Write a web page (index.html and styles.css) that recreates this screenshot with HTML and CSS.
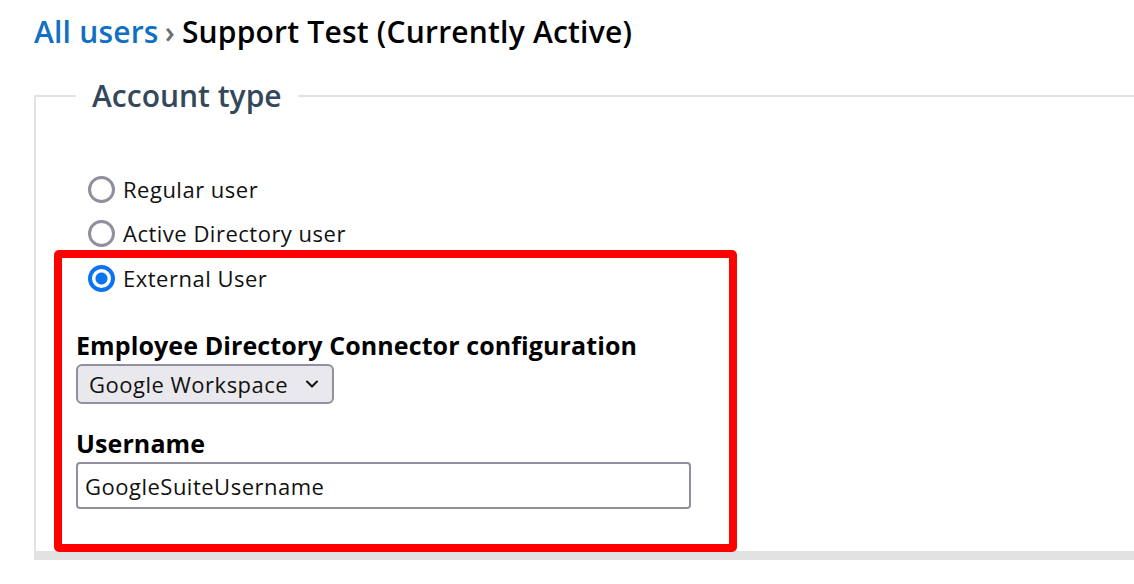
FILE: index.html
```html
<!DOCTYPE html>
<html lang="en">
<head>
<meta charset="utf-8">
<title>Support Test</title>
<link rel="stylesheet" href="styles.css">
</head>
<body>
<div class="page">
  <h1 class="crumbs"><a class="crumb-link" href="#">All users</a><span class="crumb-sep">›</span><span class="crumb-current">Support Test (Currently Active)</span></h1>

  <fieldset class="account">
    <legend class="account-legend">Account type</legend>

    <div class="radio-list">
      <label class="radio-row"><input class="radio" type="radio" name="type"><span>Regular user</span></label>
      <label class="radio-row"><input class="radio" type="radio" name="type"><span>Active Directory user</span></label>
    </div>

    <div class="highlight">
      <label class="radio-row radio-row-inner"><input class="radio" type="radio" name="type" checked><span>External User</span></label>

      <div class="field field-first">
        <div class="field-label">Employee Directory Connector configuration</div>
        <div class="select">
          <span class="select-text">Google Workspace</span>
          <svg class="select-chevron" width="14" height="10" viewBox="0 0 14 10"><path d="M2 2.5 L7 7.5 L12 2.5" fill="none" stroke="#111" stroke-width="2" stroke-linecap="round" stroke-linejoin="round"/></svg>
        </div>
      </div>

      <div class="field field-second">
        <div class="field-label">Username</div>
        <div class="text-input">GoogleSuiteUsername</div>
      </div>
    </div>
  </fieldset>
</div>
</body>
</html>
```

FILE: styles.css
```css
html, body {
  margin: 0;
  padding: 0;
  background: #ffffff;
  overflow: hidden;
}

body {
  font-family: "Open Sans", "Liberation Sans", sans-serif;
  color: #111111;
}

.page {
  padding: 12px 0 0 34px;
}

.crumbs {
  margin: 0;
  height: 40px;
  font-size: 30px;
  font-weight: 600;
  line-height: 40px;
  white-space: nowrap;
  display: flex;
  align-items: baseline;
  letter-spacing: 0.2px;
}

.crumb-link {
  color: #1170c4;
  text-decoration: none;
}

.crumb-sep {
  color: #6b6f76;
  margin: 0 7px 0 6px;
}

.crumb-current {
  color: #000000;
}

.account {
  margin: 26px -40px 0 0;
  padding: 0 0 0 18px;
  border: 0;
  border-left: 2px solid #e2e2e2;
  border-top: 2px solid #e2e2e2;
  border-bottom: 9px solid #e2e2e2;
  min-width: 0;
}

.account-legend {
  margin-left: 22px;
  padding: 0 16px;
  font-size: 30px;
  font-weight: 600;
  color: #34485c;
  line-height: 36px;
  letter-spacing: 0;
}

.radio-list {
  display: flex;
  flex-direction: column;
  gap: 4px;
  padding: 55px 0 0 34px;
}

.radio-row {
  display: flex;
  align-items: center;
  height: 40px;
  font-size: 22px;
  letter-spacing: 0.5px;
  gap: 8px;
}

.radio {
  appearance: none;
  -webkit-appearance: none;
  margin: 0;
  width: 27px;
  height: 27px;
  border-radius: 50%;
  border: 3px solid #8f8f9d;
  background: #ffffff;
  box-sizing: border-box;
}

.radio:checked {
  border: 4px solid #0b74ef;
  background: radial-gradient(circle, #0b74ef 0 5.5px, #ffffff 6.5px);
}

.highlight {
  margin-top: -3px;
  width: 653px;
  border: 8px solid #ff0000;
  border-radius: 5px;
  padding: 0 0 35px 14px;
  margin-bottom: -1px;
  position: relative;
}

.radio-row-inner {
  margin-left: 12px;
}

.field-first {
  padding-top: 31px;
}

.field-second {
  padding-top: 23px;
}

.field-label {
  font-size: 25px;
  font-weight: 700;
  color: #000000;
  line-height: 32px;
  letter-spacing: 0.1px;
}

.select {
  margin-top: 3px;
  width: 258px;
  height: 40px;
  box-sizing: border-box;
  background: #e9e9ed;
  border: 2px solid #8f8f9d;
  border-radius: 6px;
  display: flex;
  align-items: center;
  justify-content: space-between;
  padding: 0 13px 0 11px;
  font-size: 22px;
  letter-spacing: 0.5px;
}

.select-chevron {
  display: block;
}

.text-input {
  margin-top: 3px;
  width: 615px;
  height: 47px;
  box-sizing: border-box;
  border: 2px solid #8f8f9d;
  border-radius: 4px;
  padding: 0 7px;
  display: flex;
  align-items: center;
  font-size: 22px;
  letter-spacing: 0.5px;
}
```
